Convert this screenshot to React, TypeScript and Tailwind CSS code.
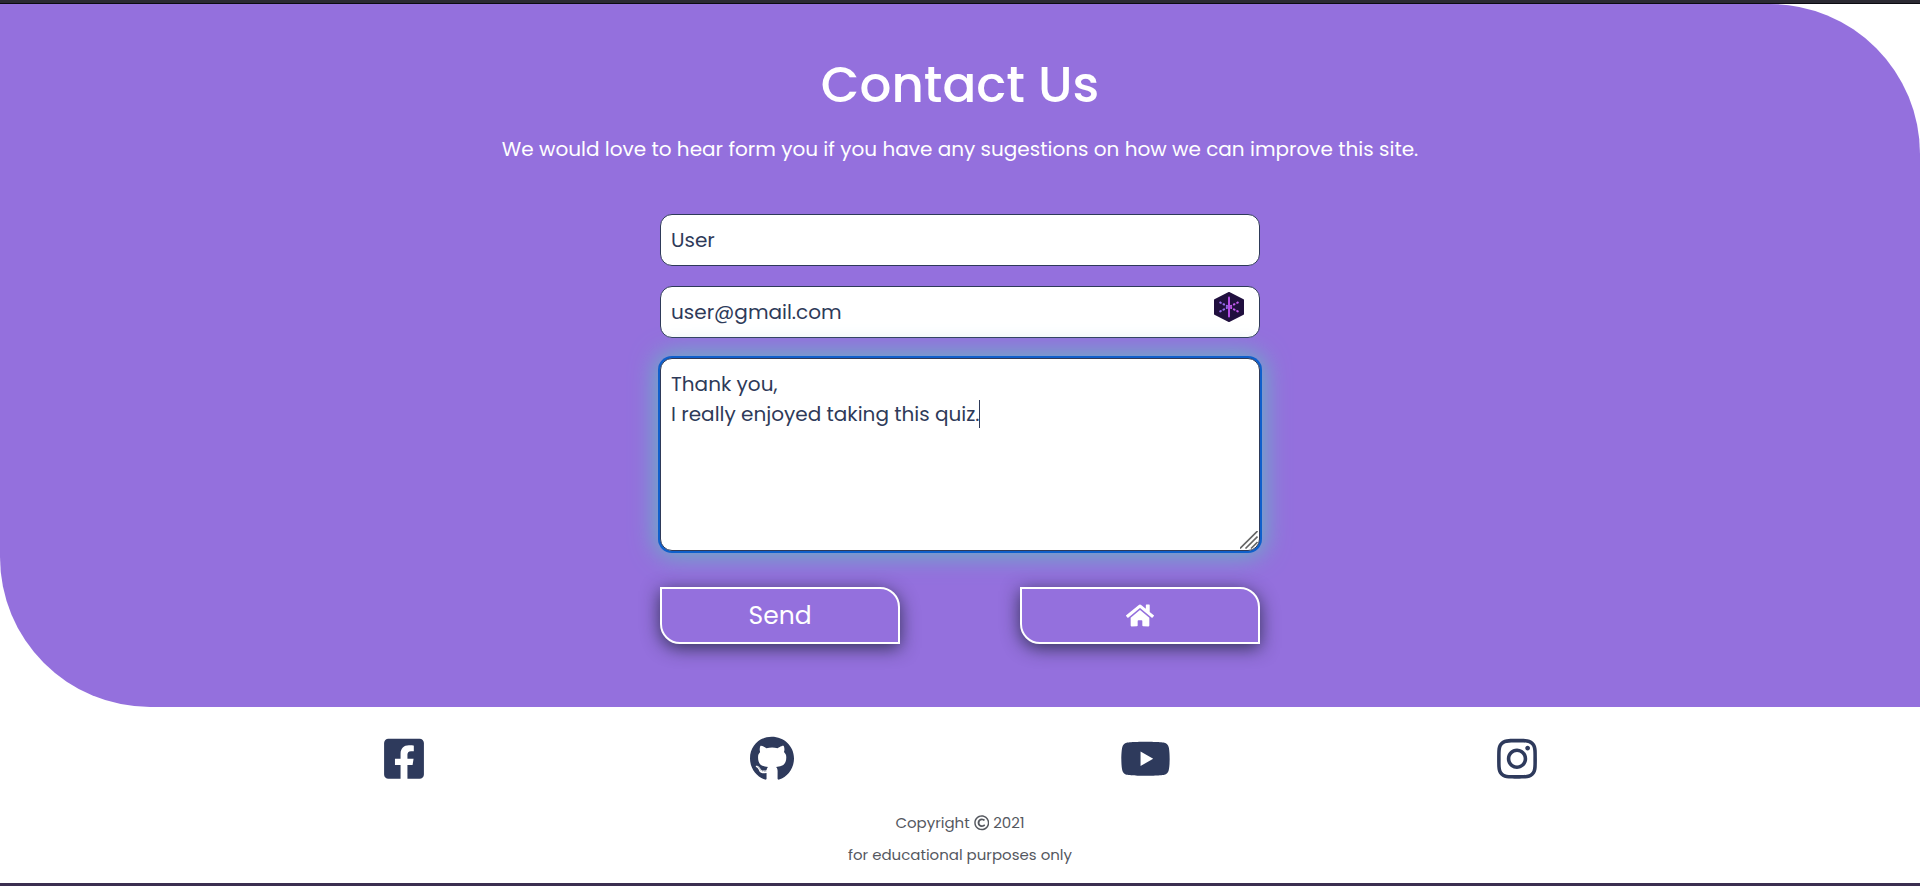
import { FaFacebookSquare, FaGithub, FaHome, FaInstagram, FaRegCopyright, FaYoutube } from "react-icons/fa";

function PasswordBadge() {
  return (
    <svg viewBox="0 0 30 30" className="h-[30px] w-[30px]" fill="none">
      <path d="M15 .8 29.2 8v14L15 29.2.8 22V8Z" fill="#21103f" stroke="#21103f" strokeWidth="1.6" strokeLinejoin="round" />
      <path d="M15 5.5v19" stroke="#b44ce6" strokeWidth="2" strokeLinecap="round" />
      <path d="M6.2 10.5 13 14M6.2 19.4 13 15.9" stroke="#9a6cf0" strokeWidth="2" strokeLinecap="round" strokeDasharray="0.7 3" />
      <path d="M23.8 10.5 17 14M23.8 19.4 17 15.9" stroke="#c45cf0" strokeWidth="2" strokeLinecap="round" strokeDasharray="0.7 3" />
    </svg>
  );
}

const field =
  "flex h-[52px] w-full items-center rounded-xl border border-[#2e3a59] bg-white pl-[10px] pr-[15px] text-[20px] text-[#2e3a59]";

const action =
  "flex h-[57px] w-[240px] items-center justify-center rounded-tr-[20px] rounded-bl-[20px] border-2 border-white bg-[#9470dd] text-[25px] text-white shadow-[0_4px_18px_rgba(35,40,65,0.85)]";

export default function App() {
  return (
    <div className="flex h-[886px] w-full flex-col overflow-hidden bg-white font-['Poppins',Inter,sans-serif]">
      <div className="h-1 shrink-0 border-b border-[#0c0b12] bg-[#2b2a33]" />
      <main className="flex h-[703px] shrink-0 flex-col items-center rounded-tr-[150px] rounded-bl-[150px] bg-[#9470dd] text-white">
        <h1 className="mt-[43px] text-[50px] leading-[75px] font-medium">Contact Us</h1>
        <p className="mt-[11px] text-[20px] leading-[32px] whitespace-nowrap">
          We would love to hear form you if you have any sugestions on how we can improve this site.
        </p>
        <form className="mt-[49px] flex w-[600px] flex-col">
          <div className={field}>
            <span>User</span>
          </div>
          <div className={`${field} mt-5 justify-between`}>
            <span>user@gmail.com</span>
            <span className="mb-[10px]">
              <PasswordBadge />
            </span>
          </div>
          <div className="relative mt-5 h-[193px] rounded-xl border border-[#2e3a59] bg-white pt-[10px] pl-[10px] text-[20px] leading-[30px] text-[#2e3a59] shadow-[0_0_0_2px_#0f5fcb,0_0_24px_5px_#68b3c4]">
            <p>Thank you,</p>
            <p className="flex items-center whitespace-nowrap">
              <span>I really enjoyed taking this quiz.</span>
              <span className="-ml-px h-7 w-px bg-[#2e3a59]" />
            </p>
            <svg viewBox="0 0 18 18" className="absolute right-px bottom-px h-[18px] w-[18px]" stroke="#666" strokeWidth="1.6">
              <path d="M0 17.5 17.5 0M5.5 17.5l12-12M11 17.5l6.5-6.5" />
            </svg>
          </div>
          <div className="mt-9 flex justify-between">
            <button type="button" className={action}>
              Send
            </button>
            <button type="button" className={action} aria-label="Home">
              <FaHome className="h-[25px] w-[28px]" />
            </button>
          </div>
        </form>
      </main>
      <footer className="flex flex-1 flex-col items-center text-[#55585f]">
        <div className="mt-[29px] flex h-[46px] items-center justify-center gap-[326px] text-[#2e3a5c]">
          <FaFacebookSquare className="h-[45.5px] w-[40px]" />
          <FaGithub className="h-[45.5px] w-[44px]" />
          <FaYoutube className="h-[45.5px] w-[51px]" />
          <FaInstagram className="h-[45.5px] w-[40px]" />
        </div>
        <p className="mt-[29px] flex items-center gap-[4px] text-[15px] leading-[24px]">
          Copyright <FaRegCopyright className="h-[15.5px] w-[15.5px]" /> 2021
        </p>
        <p className="mt-2 text-[15px] leading-[24px]">for educational purposes only</p>
      </footer>
      <div className="h-[3px] shrink-0 bg-[#3b2f50]" />
    </div>
  );
}
